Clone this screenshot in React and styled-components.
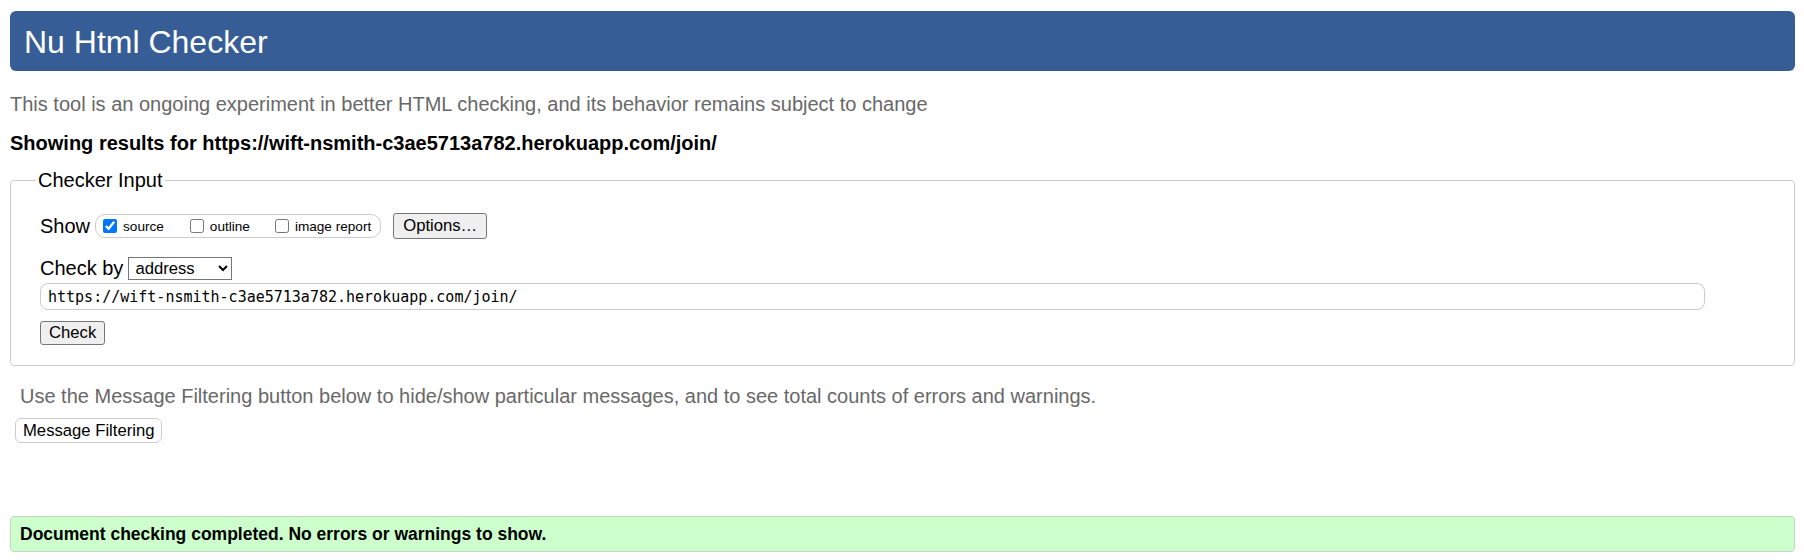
import styled, { createGlobalStyle } from 'styled-components'

const GlobalStyle = createGlobalStyle`
  html, body {
    margin: 0;
    padding: 0;
    background: #fff;
  }
  body {
    font-family: 'Liberation Sans', Arial, sans-serif;
    font-size: 20px;
    color: #000;
  }
`

const Page = styled.div`
  padding: 11px 9px 8px 10px;
`

const Header = styled.header`
  height: 60px;
  background: #365d95;
  border-radius: 6px;
  display: flex;
  align-items: center;
  padding-left: 14px;
`

const Title = styled.h1`
  margin: 0;
  padding-top: 2px;
  font-size: 32px;
  font-weight: 400;
  line-height: 37px;
  color: #fff;
`

const Note = styled.p`
  margin: ${(props) => props.top}px 0 0;
  padding-left: ${(props) => props.indent || 0}px;
  font-size: 20px;
  line-height: 23px;
  color: #686868;
`

const Results = styled.p`
  margin: 16px 0 0;
  font-size: 20px;
  font-weight: 700;
  line-height: 23px;
`

const Fieldset = styled.fieldset`
  margin: 14px 0 0;
  padding: 21px 24px 20px 29px;
  border: 1px solid #ccc;
  border-radius: 4px;
  min-width: 0;
`

const Legend = styled.legend`
  margin-left: -4px;
  padding: 0 2px;
  font-size: 20px;
  line-height: 23px;
`

const Row = styled.div`
  display: flex;
  align-items: center;
  height: ${(props) => props.height}px;
  margin-top: ${(props) => props.top || 0}px;
`

const RowLabel = styled.span`
  font-size: 20px;
  line-height: 23px;
  margin-right: 5px;
`

const ShowGroup = styled.div`
  display: flex;
  align-items: center;
  height: 22px;
  padding: 0 9px 0 7px;
  border: 1px solid #ccc;
  border-radius: 10px;
`

const CheckItem = styled.label`
  display: flex;
  align-items: center;
  gap: 6px;
  margin-right: ${(props) => props.space || 0}px;
  font-size: 13.6px;
  line-height: 16px;
  padding-top: 2px;
`

const Box = styled.input`
  width: 14px;
  height: 14px;
  margin: 0 0 2px;
  accent-color: #0075ff;
`

const NativeButton = styled.button`
  box-sizing: border-box;
  height: ${(props) => props.h}px;
  margin-left: ${(props) => props.left || 0}px;
  padding: 0 ${(props) => props.pad}px;
  font-family: 'Liberation Sans', Arial, sans-serif;
  font-size: ${(props) => props.size || 16.67}px;
  color: #000;
  background: #efefef;
  border: 1px solid #767676;
  border-radius: 3px;
`

const Select = styled.select`
  box-sizing: border-box;
  width: 104px;
  height: 23px;
  padding: 0 0 0 2px;
  font-family: 'Liberation Sans', Arial, sans-serif;
  font-size: 16.67px;
  color: #000;
  background: #fff;
  border: 1px solid #767676;
  border-radius: 0;
`

const UrlInput = styled.input`
  display: block;
  box-sizing: border-box;
  width: 1665px;
  height: 27px;
  margin-top: 3px;
  padding: 0 7px;
  font-family: 'DejaVu Sans Mono', 'Liberation Mono', monospace;
  font-size: 15px;
  color: #000;
  border: 1px solid #ccc;
  border-radius: 8px;
  outline: none;
`

const CheckButton = styled(NativeButton)`
  display: block;
  margin-top: 11px;
`

const FilterButton = styled.button`
  display: block;
  box-sizing: border-box;
  height: 25px;
  margin: 10px 0 0 5px;
  padding: 0 7px;
  font-family: 'Liberation Sans', Arial, sans-serif;
  font-size: 16.67px;
  color: #000;
  background: #fff;
  border: 1px solid #ccc;
  border-radius: 6px;
`

const Success = styled.div`
  display: flex;
  align-items: center;
  height: 36px;
  box-sizing: border-box;
  margin-top: 73px;
  padding-left: 9px;
  background: #ccffcc;
  border: 1px solid #c2d6c2;
  border-radius: 4px;
  font-size: 17.5px;
  font-weight: 700;
`

const url = 'https://wift-nsmith-c3ae5713a782.herokuapp.com/join/'

const App = () => (
  <Page>
    <GlobalStyle />
    <Header>
      <Title>Nu Html Checker</Title>
    </Header>
    <Note top={22}>
      This tool is an ongoing experiment in better HTML checking, and its behavior remains
      subject to change
    </Note>
    <Results>Showing results for {url}</Results>
    <Fieldset>
      <Legend>Checker Input</Legend>
      <Row height={26}>
        <RowLabel>Show</RowLabel>
        <ShowGroup>
          <CheckItem space={26}>
            <Box type='checkbox' defaultChecked />
            source
          </CheckItem>
          <CheckItem space={25}>
            <Box type='checkbox' />
            outline
          </CheckItem>
          <CheckItem>
            <Box type='checkbox' />
            image report
          </CheckItem>
        </ShowGroup>
        <NativeButton h={26} pad={9} left={12}>
          Options…
        </NativeButton>
      </Row>
      <Row height={23} top={18}>
        <RowLabel>Check by</RowLabel>
        <Select defaultValue='address'>
          <option value='address'>address</option>
          <option value='file'>file upload</option>
          <option value='text'>text input</option>
        </Select>
      </Row>
      <UrlInput type='url' defaultValue={url} />
      <CheckButton h={24} pad={8}>
        Check
      </CheckButton>
    </Fieldset>
    <Note top={19} indent={10}>
      Use the Message Filtering button below to hide/show particular messages, and to see total
      counts of errors and warnings.
    </Note>
    <FilterButton>Message Filtering</FilterButton>
    <Success>Document checking completed. No errors or warnings to show.</Success>
  </Page>
)

export default App
